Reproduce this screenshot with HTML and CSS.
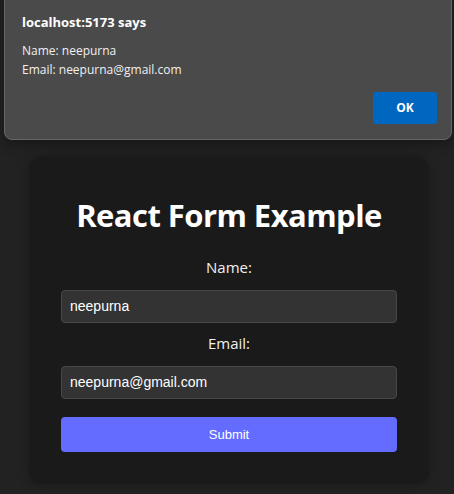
FILE: index.html
```html
<!DOCTYPE html>
<html>
<head>
<meta charset="utf-8">
<link rel="stylesheet" href="styles.css">
</head>
<body>
<div class="page">
  <div class="card">
    <h1 class="title">React Form Example</h1>
    <form class="form">
      <label class="label">Name:</label>
      <div class="input">neepurna</div>
      <label class="label">Email:</label>
      <div class="input">neepurna@gmail.com</div>
      <div class="submit">Submit</div>
    </form>
  </div>
</div>
<div class="dialog">
  <div class="dlg-title">localhost:5173 says</div>
  <div class="dlg-body">Name: neepurna<br>Email: neepurna@gmail.com</div>
  <div class="dlg-actions"><div class="ok">OK</div></div>
</div>
</body>
</html>
```
FILE: styles.css
```css
html, body {
  margin: 0;
  padding: 0;
  width: 454px;
  height: 494px;
  overflow: hidden;
  background: #222222;
}
.page {
  padding: 157px 25px 0 29px;
}
.card {
  width: 400px;
  height: 327px;
  box-sizing: border-box;
  background: #1a1a1a;
  border-radius: 12px;
  box-shadow: 0 0 12px rgba(0,0,0,0.25);
  padding: 38px 32px 0 32px;
  font-family: "Open Sans", "Noto Sans", sans-serif;
  color: #ffffff;
}
.title {
  margin: 0;
  text-align: center;
  font-size: 31px;
  font-weight: 700;
  line-height: 40px;
  letter-spacing: -0.55px;
}
.form {
  display: flex;
  flex-direction: column;
  margin-top: 22px;
}
.label {
  text-align: center;
  font-size: 15px;
  line-height: 20px;
  color: #f0f0f0;
  margin-bottom: 13px;
}
.input {
  height: 33px;
  box-sizing: border-box;
  background: #333333;
  border: 1px solid #474747;
  border-radius: 4px;
  padding: 0 8px;
  font-family: "Liberation Sans", Arial, sans-serif;
  font-size: 14px;
  font-weight: 400;
  line-height: 31px;
  color: #ffffff;
  margin-bottom: 10px;
}
.submit {
  margin-top: 8px;
  height: 35px;
  background: #646cff;
  border-radius: 4px;
  text-align: center;
  font-family: "Liberation Sans", Arial, sans-serif;
  font-size: 13px;
  line-height: 35px;
  color: #ffffff;
}
.dialog {
  position: absolute;
  left: 4px;
  top: -10px;
  width: 448px;
  height: 150px;
  box-sizing: border-box;
  background: #4a4a4a;
  border: 1px solid #666666;
  border-radius: 8px;
  box-shadow: 0 4px 12px rgba(0,0,0,0.35);
  padding: 22px 14px 0 17px;
  font-family: "Open Sans", "Noto Sans", sans-serif;
  color: #ffffff;
}
.dlg-title {
  font-size: 13px;
  font-weight: 700;
  line-height: 18px;
}
.dlg-body {
  margin-top: 10px;
  font-size: 12px;
  line-height: 19px;
  color: #f0f0f0;
}
.dlg-actions {
  display: flex;
  justify-content: flex-end;
  margin-top: 13px;
}
.ok {
  width: 64px;
  height: 32px;
  background: #0067c0;
  border-radius: 3px;
  text-align: center;
  font-size: 12px;
  font-weight: 700;
  line-height: 32px;
  color: #ffffff;
}
```
